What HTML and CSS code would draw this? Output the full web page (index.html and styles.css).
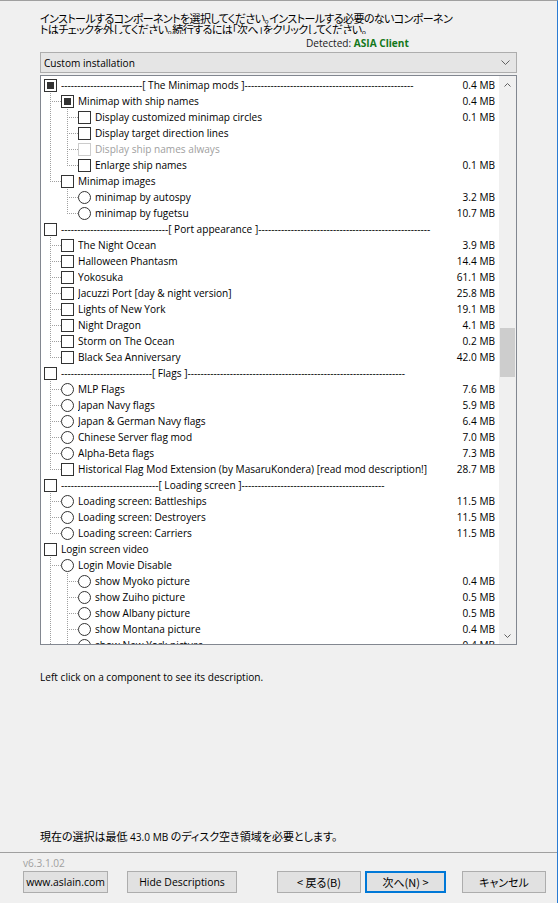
FILE: index.html
```html
<!DOCTYPE html>
<html lang="ja">
<head>
<meta charset="utf-8">
<title>Components</title>
<link rel="stylesheet" href="styles.css">
</head>
<body>
<div class="window">
  <div class="content">
    <p class="intro">インストールするコンポーネントを選択してください。インストールする必要のないコンポーネン<br>トはチェックを外してください。続行するには「次へ」をクリックしてください。</p>
    <div class="detected"><span class="det-label">Detected:</span> <b class="det-val">ASIA Client</b></div>
    <div class="combo">
      <span class="combo-text">Custom installation</span>
      <svg class="combo-arrow" width="9" height="5" viewBox="0 0 9 5"><path d="M0.5 0.5 L4.5 4.5 L8.5 0.5" fill="none" stroke="#606060" stroke-width="1"/></svg>
    </div>
    <div class="tree">
      <div class="tree-list">
        <div class="row"><span class="cb mixed"></span><span class="lbl">-------------------------[ The Minimap mods ]----------------------------------------------------</span><span class="sz">0.4 MB</span></div>
        <div class="row"><i class="g tee"></i><span class="cb mixed"></span><span class="lbl">Minimap with ship names</span><span class="sz">0.4 MB</span></div>
        <div class="row"><i class="g pipe"></i><i class="g tee"></i><span class="cb"></span><span class="lbl">Display customized minimap circles</span><span class="sz">0.1 MB</span></div>
        <div class="row"><i class="g pipe"></i><i class="g tee"></i><span class="cb"></span><span class="lbl">Display target direction lines</span></div>
        <div class="row"><i class="g pipe"></i><i class="g tee"></i><span class="cb dis"></span><span class="lbl dis">Display ship names always</span></div>
        <div class="row"><i class="g pipe"></i><i class="g elbow"></i><span class="cb"></span><span class="lbl">Enlarge ship names</span><span class="sz">0.1 MB</span></div>
        <div class="row"><i class="g elbow"></i><span class="cb"></span><span class="lbl">Minimap images</span></div>
        <div class="row"><i class="g"></i><i class="g tee"></i><span class="rb"></span><span class="lbl">minimap by autospy</span><span class="sz">3.2 MB</span></div>
        <div class="row"><i class="g"></i><i class="g elbow"></i><span class="rb"></span><span class="lbl">minimap by fugetsu</span><span class="sz">10.7 MB</span></div>

        <div class="row"><span class="cb"></span><span class="lbl">---------------------------------[ Port appearance ]-----------------------------------------------------</span></div>
        <div class="row"><i class="g tee"></i><span class="cb"></span><span class="lbl">The Night Ocean</span><span class="sz">3.9 MB</span></div>
        <div class="row"><i class="g tee"></i><span class="cb"></span><span class="lbl">Halloween Phantasm</span><span class="sz">14.4 MB</span></div>
        <div class="row"><i class="g tee"></i><span class="cb"></span><span class="lbl">Yokosuka</span><span class="sz">61.1 MB</span></div>
        <div class="row"><i class="g tee"></i><span class="cb"></span><span class="lbl">Jacuzzi Port [day &amp; night version]</span><span class="sz">25.8 MB</span></div>
        <div class="row"><i class="g tee"></i><span class="cb"></span><span class="lbl">Lights of New York</span><span class="sz">19.1 MB</span></div>
        <div class="row"><i class="g tee"></i><span class="cb"></span><span class="lbl">Night Dragon</span><span class="sz">4.1 MB</span></div>
        <div class="row"><i class="g tee"></i><span class="cb"></span><span class="lbl">Storm on The Ocean</span><span class="sz">0.2 MB</span></div>
        <div class="row"><i class="g elbow"></i><span class="cb"></span><span class="lbl">Black Sea Anniversary</span><span class="sz">42.0 MB</span></div>

        <div class="row"><span class="cb"></span><span class="lbl">----------------------------[ Flags ]-------------------------------------------------------------------</span></div>
        <div class="row"><i class="g tee"></i><span class="rb"></span><span class="lbl">MLP Flags</span><span class="sz">7.6 MB</span></div>
        <div class="row"><i class="g tee"></i><span class="rb"></span><span class="lbl">Japan Navy flags</span><span class="sz">5.9 MB</span></div>
        <div class="row"><i class="g tee"></i><span class="rb"></span><span class="lbl">Japan &amp; German Navy flags</span><span class="sz">6.4 MB</span></div>
        <div class="row"><i class="g tee"></i><span class="rb"></span><span class="lbl">Chinese Server flag mod</span><span class="sz">7.0 MB</span></div>
        <div class="row"><i class="g tee"></i><span class="rb"></span><span class="lbl">Alpha-Beta flags</span><span class="sz">7.3 MB</span></div>
        <div class="row"><i class="g elbow"></i><span class="cb"></span><span class="lbl">Historical Flag Mod Extension (by MasaruKondera) [read mod description!]</span><span class="sz">28.7 MB</span></div>

        <div class="row"><span class="cb"></span><span class="lbl">------------------------------[ Loading screen ]--------------------------------------------</span></div>
        <div class="row"><i class="g tee"></i><span class="rb"></span><span class="lbl">Loading screen: Battleships</span><span class="sz">11.5 MB</span></div>
        <div class="row"><i class="g tee"></i><span class="rb"></span><span class="lbl">Loading screen: Destroyers</span><span class="sz">11.5 MB</span></div>
        <div class="row"><i class="g elbow"></i><span class="rb"></span><span class="lbl">Loading screen: Carriers</span><span class="sz">11.5 MB</span></div>

        <div class="row"><span class="cb"></span><span class="lbl">Login screen video</span></div>
        <div class="row"><i class="g tee"></i><span class="rb"></span><span class="lbl">Login Movie Disable</span></div>
        <div class="row"><i class="g pipe"></i><i class="g tee"></i><span class="rb"></span><span class="lbl">show Myoko picture</span><span class="sz">0.4 MB</span></div>
        <div class="row"><i class="g pipe"></i><i class="g tee"></i><span class="rb"></span><span class="lbl">show Zuiho picture</span><span class="sz">0.5 MB</span></div>
        <div class="row"><i class="g pipe"></i><i class="g tee"></i><span class="rb"></span><span class="lbl">show Albany picture</span><span class="sz">0.5 MB</span></div>
        <div class="row"><i class="g pipe"></i><i class="g tee"></i><span class="rb"></span><span class="lbl">show Montana picture</span><span class="sz">0.4 MB</span></div>
        <div class="row"><i class="g pipe"></i><i class="g tee"></i><span class="rb"></span><span class="lbl">show New York picture</span><span class="sz">0.4 MB</span></div>
        <div class="row"><i class="g pipe"></i><i class="g tee"></i><span class="rb"></span><span class="lbl">show Missouri picture</span><span class="sz">0.4 MB</span></div>
      </div>
      <div class="vscroll">
        <div class="sb-btn"><svg width="7" height="4" viewBox="0 0 7 4"><path d="M0.5 3.5 L3.5 0.5 L6.5 3.5" fill="none" stroke="#606060"/></svg></div>
        <div class="sb-track"><div class="sb-thumb" style="margin-top:235px;height:49px"></div></div>
        <div class="sb-btn"><svg width="7" height="4" viewBox="0 0 7 4"><path d="M0.5 0.5 L3.5 3.5 L6.5 0.5" fill="none" stroke="#606060"/></svg></div>
      </div>
    </div>
    <p class="desc">Left click on a component to see its description.</p>
    <p class="space">現在の選択は最低 <span class="num">43.0 MB</span> のディスク空き領域を必要とします。</p>
  </div>
  <div class="footer">
    <div class="version">v6.3.1.02</div>
    <div class="buttons">
      <button class="btn b-site">www.aslain.com</button>
      <button class="btn b-hide">Hide Descriptions</button>
      <button class="btn jp b-back">&lt; 戻る(B)</button>
      <button class="btn jp b-next">次へ(N) &gt;</button>
      <button class="btn jp b-cancel">キャンセル</button>
    </div>
  </div>
</div>
</body>
</html>
```
FILE: styles.css
```css
html, body {
  margin: 0;
  padding: 0;
}
body {
  background: #f0f0f0;
  font-family: "Open Sans", "Noto Sans CJK JP", sans-serif;
  font-size: 10.1px;
  color: #000;
  --vl: repeating-linear-gradient(to bottom, #a0a0a0 0 1px, transparent 1px 2px);
  --hl: repeating-linear-gradient(to right, #a0a0a0 0 1px, transparent 1px 2px);
}
.window {
  width: 558px;
  height: 903px;
  box-sizing: border-box;
  border-top: 1px solid #a0a0a0;
  border-right: 1px solid #2b7cd3;
  display: flex;
  flex-direction: column;
  overflow: hidden;
}
.content {
  flex: 1;
  display: flex;
  flex-direction: column;
  padding: 0 40px;
  min-height: 0;
}
.intro {
  margin: 12px 0 0;
  height: 21px;
  overflow: hidden;
  font-family: "Noto Sans CJK JP", sans-serif;
  font-size: 11px;
  line-height: 11px;
  letter-spacing: -0.6px;
  font-feature-settings: "palt";
  white-space: nowrap;
}
.detected {
  margin-top: 3px;
  height: 13px;
  line-height: 13px;
  padding-left: 266px;
  white-space: nowrap;
  color: #1a1a1a;
  font-size: 10.1px;
}
.det-val {
  color: #13781b;
  font-weight: 700;
}
.combo {
  margin-top: 2px;
  height: 21px;
  box-sizing: border-box;
  border: 1px solid #adadad;
  background: #e5e5e5;
  display: flex;
  align-items: center;
  padding: 0 6px 0 3px;
}
.combo-text {
  flex: 1;
}
.tree {
  margin-top: 2px;
  height: 570px;
  box-sizing: border-box;
  border: 1px solid #828790;
  background: #fff;
  display: flex;
  flex: none;
}
.tree-list {
  flex: 1;
  overflow: hidden;
  padding: 1px 4px 0 3px;
  min-width: 0;
}
.row {
  height: 16px;
  display: flex;
  align-items: center;
  white-space: nowrap;
}
.g {
  width: 17px;
  height: 16px;
  flex: none;
}
.g.pipe {
  background: var(--vl) 6px 0 / 1px 100% no-repeat;
}
.g.tee {
  background: var(--vl) 6px 0 / 1px 100% no-repeat, var(--hl) 8px 8px / 9px 1px no-repeat;
}
.g.elbow {
  background: var(--vl) 6px 0 / 1px 9px no-repeat, var(--hl) 8px 8px / 9px 1px no-repeat;
}
.cb, .rb {
  width: 13px;
  height: 13px;
  box-sizing: border-box;
  border: 1px solid #333;
  background: #fff;
  margin-right: 4px;
  flex: none;
  display: flex;
  align-items: center;
  justify-content: center;
}
.rb {
  border-radius: 50%;
}
.cb.mixed::after {
  content: "";
  width: 7px;
  height: 7px;
  background: #333;
}
.cb.dis {
  border-color: #cccccc;
}
.lbl {
  flex: 1;
  overflow: hidden;
  min-width: 0;
}
.lbl.dis {
  color: #a0a0a0;
}
.sz {
  flex: none;
  text-align: right;
}
.vscroll {
  width: 17px;
  flex: none;
  background: #f0f0f0;
  display: flex;
  flex-direction: column;
}
.sb-btn {
  height: 17px;
  flex: none;
  display: flex;
  align-items: center;
  justify-content: center;
}
.sb-btn svg {
  display: block;
}
.sb-track {
  flex: 1;
  display: flex;
  flex-direction: column;
}
.sb-thumb {
  margin: 0 1px;
  background: #cdcdcd;
}
.desc {
  margin: 24px 0 0;
  line-height: 16px;
}
.space {
  margin: auto 0 7px;
  line-height: 16px;
  font-family: "Noto Sans CJK JP", sans-serif;
  font-size: 11px;
  font-feature-settings: "palt";
}
.space .num {
  font-family: "Open Sans", sans-serif;
  font-size: 10.1px;
}
.footer {
  height: 51px;
  flex: none;
  box-sizing: border-box;
  border-top: 1px solid #a0a0a0;
  padding: 4px 0 0 23px;
}
.version {
  height: 12px;
  line-height: 12px;
  color: #a0a0a0;
}
.buttons {
  margin-top: 2px;
  display: flex;
}
.btn {
  height: 22px;
  box-sizing: border-box;
  border: 1px solid #adadad;
  background: #e1e1e1;
  font-family: "Open Sans", "Noto Sans CJK JP", sans-serif;
  font-size: 10.4px;
  color: #000;
  padding: 0;
  display: flex;
  align-items: center;
  justify-content: center;
}
.btn.jp {
  font-family: "Noto Sans CJK JP", sans-serif;
  font-size: 11px;
  font-feature-settings: "palt";
}
.b-site { width: 85px; }
.b-hide { width: 110px; margin-left: 19px; }
.b-back { width: 84px; margin-left: 40px; }
.b-next {
  width: 81px;
  margin-left: 4px;
  border-color: #0078d7;
  box-shadow: inset 0 0 0 1px #0078d7;
}
.b-cancel { width: 84px; margin-left: 16px; }
```
